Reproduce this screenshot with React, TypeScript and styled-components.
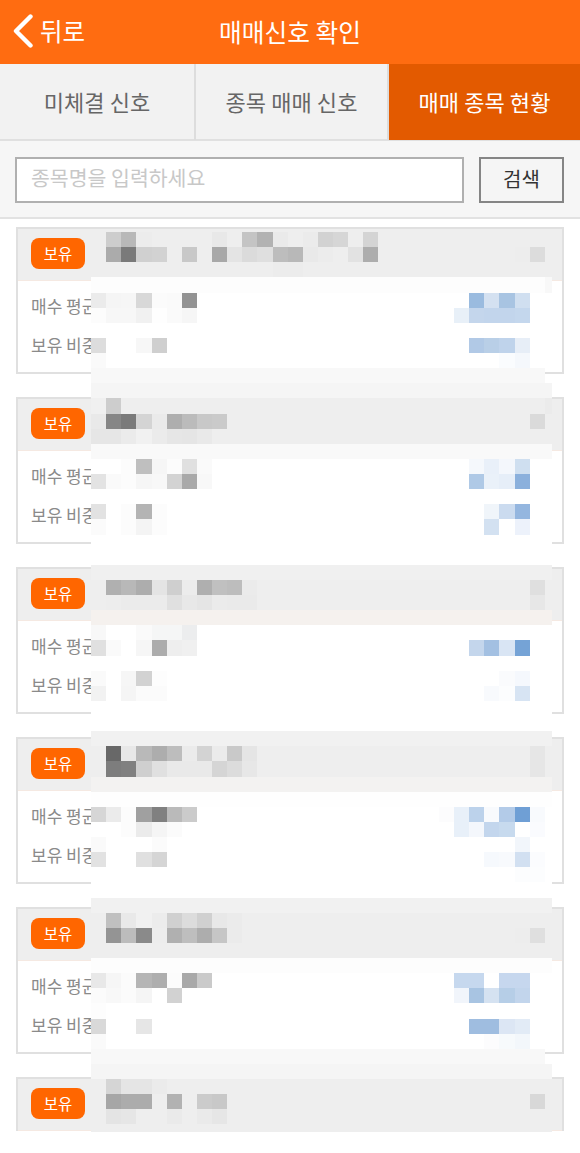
import React from "react";
import styled, { createGlobalStyle } from "styled-components";

const GlobalStyle = createGlobalStyle`
  html, body { margin: 0; padding: 0; background: #fff; }
  * { box-sizing: border-box; }
  body { font-family: "Noto Sans CJK KR", "Noto Sans", sans-serif; }
`;

const Page = styled.div`
  position: relative;
  width: 580px;
  height: 1153px;
  overflow: hidden;
  background: #fff;
`;

const TopBar = styled.header`
  display: grid;
  grid-template-columns: 1fr auto 1fr;
  align-items: center;
  height: 64px;
  padding-bottom: 3px;
  background: #ff6c11;
  color: #fff;
`;

const BackButton = styled.button`
  display: flex;
  align-items: center;
  gap: 7px;
  padding: 0 0 0 13px;
  border: 0;
  background: none;
  color: #fff;
  font: 400 24.5px "Noto Sans CJK KR", sans-serif;
  justify-self: start;
`;

const Title = styled.h1`
  margin: 0;
  font-size: 24.7px;
  font-weight: 400;
`;

const Tabs = styled.nav`
  display: grid;
  grid-template-columns: 196px 193px 191px;
  height: 77px;
  background: #f2f2f2;
  border-bottom: 2px solid #e0e0e0;
`;

const Tab = styled.div<{ $active?: boolean }>`
  display: flex;
  align-items: center;
  justify-content: center;
  padding-bottom: 3px;
  font-size: 22px;
  letter-spacing: 0.1px;
  color: ${(p) => (p.$active ? "#fff" : "#666")};
  background: ${(p) => (p.$active ? "#e35a00" : "transparent")};
  border-right: ${(p) => (p.$active ? "0" : "2px solid #dddddd")};
  height: ${(p) => (p.$active ? "76px" : "auto")};
`;

const SearchBar = styled.form`
  display: flex;
  gap: 15px;
  height: 78px;
  padding: 16px 16px 15px 15px;
  background: #f6f6f6;
  border-bottom: 2px solid #e2e2e2;
`;

const SearchInput = styled.input`
  flex: 1;
  min-width: 0;
  height: 46px;
  padding: 0 0 6px 14px;
  border: 2px solid #b0b0b0;
  border-radius: 0;
  background: #fff;
  outline: none;
  font: 400 20.5px "Noto Sans CJK KR", sans-serif;
  &::placeholder { color: #c8c8c8; opacity: 1; }
`;

const SearchButton = styled.button`
  width: 85px;
  height: 46px;
  padding: 0 0 3px;
  border: 2px solid #858585;
  border-radius: 0;
  background: #f5f5f5;
  color: #333;
  font: 400 20px "Noto Sans CJK KR", sans-serif;
`;

const List = styled.main`
  display: flex;
  flex-direction: column;
  gap: 23px;
  padding: 8px 16px 0;
`;

const Card = styled.section<{ $cut?: boolean }>`
  flex: none;
  height: ${(p) => (p.$cut ? "54px" : "147px")};
  border: 2px solid #e0e0e0;
  border-bottom-width: ${(p) => (p.$cut ? "0" : "2px")};
  background: #fff;
`;

const CardHead = styled.div`
  display: flex;
  align-items: center;
  height: 52px;
  padding: 0 0 2px 13px;
  background: #eeeeee;
  border-bottom: 1px solid #f5e9e2;
`;

const Badge = styled.span`
  display: flex;
  align-items: center;
  justify-content: center;
  width: 54px;
  height: 31px;
  padding-bottom: 2px;
  border-radius: 8px;
  background: #ff6600;
  color: #fff;
  font-size: 15.5px;
`;

const CardBody = styled.div`
  display: flex;
  flex-direction: column;
  padding: 5px 13px 0;
`;

const InfoRow = styled.div`
  display: flex;
  align-items: center;
  height: 39px;
  color: #8a8a8a;
  font-size: 17px;
`;

const Mosaic = styled.svg`
  position: absolute;
  left: 91px;
  top: 232px;
  display: block;
`;

const CELL = 15.125;
type Cell = [number, string];

const WHITE = "#ffffff";
const BANDS: [number, string, number?][] = [
  [3, "#fdfdfd"], [4, WHITE], [5, WHITE], [6, WHITE], [7, WHITE], [8, WHITE],
  [9, "#f8f8f8", 30], [10, "#f5f5f5"], [11, "#eeeeee"], [12, "#eeeeee"], [13, "#eeeeee"],
  [14, "#f9f9f9"], [15, WHITE], [16, WHITE], [17, WHITE], [18, WHITE], [19, WHITE], [20, WHITE], [21, WHITE],
  [22, "#f0f0f0"], [23, "#eeeeee"], [24, "#eeeeee"], [25, "#f5f1ee"],
  [26, WHITE], [27, WHITE], [28, WHITE], [29, WHITE], [30, WHITE], [31, WHITE], [32, WHITE],
  [33, "#f1f1f1"], [34, "#eeeeee"], [35, "#eeeeee"], [36, "#f3f2f1"], [37, "#fefefe"],
  [38, WHITE], [39, WHITE], [40, WHITE], [41, WHITE], [42, WHITE], [43, WHITE],
  [44, "#f1f1f1"], [45, "#eeeeee"], [46, "#eeeeee"], [47, "#eeeeee"], [48, "#fdfdfd"],
  [49, WHITE], [50, WHITE], [51, WHITE], [52, WHITE], [53, WHITE],
  [54, "#f8f8f8", 30], [55, "#f5f5f5"], [56, "#eeeeee"], [57, "#eeeeee"], [58, "#eeeeee"], [59, "#eeeeee"],
];

const CELLS: Record<number, Cell[]> = {
  0: [[1, "#cdcdcd"], [2, "#b8b8b8"], [3, "#ececec"], [8, "#e8e8e8"], [10, "#c4c4c4"], [11, "#b2b2b2"], [12, "#eaeaea"], [14, "#ebebeb"], [15, "#d2d2d2"], [16, "#d6d6d6"], [18, "#d4d4d4"]],
  1: [[1, "#ababab"], [2, "#7a7a7a"], [3, "#d0d0d0"], [4, "#d2d2d2"], [6, "#c8c8c8"], [8, "#a8a8a8"], [9, "#e4e4e4"], [10, "#dbdbdb"], [11, "#dfdfdf"], [12, "#bdbdbd"], [13, "#b8b8b8"], [14, "#e9e9e9"], [15, "#ececec"], [17, "#e2e2e2"], [18, "#adadad"], [28, "#ededed"], [29, "#dcdcdc"]],
  2: [[12, "#ececec"], [13, "#ececec"]],
  3: [[30, "#f8f8f8"]],
  4: [[0, "#ebebeb"], [1, "#f5f5f5"], [2, "#f6f6f6"], [3, "#d8d8d8"], [4, "#fbfbfb"], [5, "#fafafa"], [6, "#939393"], [25, "#9abbdf"], [26, "#d4e1f1"], [27, "#a8c4e2"], [28, "#d0dff0"]],
  5: [[0, "#fcfcfc"], [1, "#f7f7f7"], [2, "#f7f7f7"], [3, "#f1f1f1"], [4, "#fefefe"], [5, "#fafafa"], [6, "#f6f6f6"], [24, "#e8f0f8"], [25, "#c4d6ec"], [26, "#c2d5ec"], [27, "#c2d5ec"], [28, "#c4d7ed"]],
  7: [[0, "#dddddd"], [3, "#f7f7f7"], [4, "#cfcfcf"], [25, "#b1c9e6"], [26, "#b9cfe7"], [27, "#bfd3eb"], [28, "#e7eef7"]],
  8: [[0, "#fafafa"], [27, "#fafcfe"], [28, "#f5f8fc"]],
  11: [[0, "#f0f0f0"], [1, "#cdcdcd"], [30, "#ebebeb"]],
  12: [[0, "#e9e9e9"], [1, "#868686"], [2, "#7a7a7a"], [3, "#d4d4d4"], [4, "#eaeaea"], [5, "#aeaeae"], [6, "#bbbbbb"], [7, "#c8c8c8"], [8, "#cacaca"], [29, "#dadada"]],
  13: [[0, "#e6e6e6"], [1, "#e6e6e6"], [2, "#ebebeb"], [3, "#f1f1f1"], [4, "#ebebeb"], [5, "#e6e6e6"], [6, "#e5e5e5"], [7, "#e9e9e9"]],
  15: [[2, "#fcfcfc"], [3, "#bfbfbf"], [4, "#f6f6f6"], [5, "#fcfcfc"], [6, "#e0e0e0"], [7, "#fafafa"], [25, "#f5f8fc"], [26, "#e9f0f9"], [27, "#f4f7fc"], [28, "#cfdff0"]],
  16: [[0, "#e3e3e3"], [1, "#fafafa"], [2, "#fcfcfc"], [3, "#f6f6f6"], [4, "#f8f8f8"], [5, "#d3d3d3"], [6, "#a9a9a9"], [7, "#f8f8f8"], [25, "#afc9e6"], [26, "#eaf1f9"], [27, "#e6eef8"], [28, "#8bb0dc"]],
  18: [[0, "#e2e2e2"], [2, "#fcfcfc"], [3, "#b4b4b4"], [4, "#fcfcfc"], [26, "#f0f5fa"], [27, "#cbdbef"], [28, "#94b6df"]],
  19: [[0, "#fbfbfb"], [2, "#fcfcfc"], [3, "#f4f4f4"], [4, "#fcfcfc"], [26, "#d3e1f1"], [28, "#edf2fb"]],
  23: [[1, "#b0b0b0"], [2, "#b8b8b8"], [3, "#adadad"], [4, "#e4e4e4"], [5, "#cfcfcf"], [6, "#ececec"], [7, "#afafaf"], [8, "#c0c0c0"], [9, "#bdbdbd"], [10, "#ebebeb"], [29, "#dfdfdf"]],
  24: [[1, "#ededed"], [2, "#ebebeb"], [3, "#ebebeb"], [4, "#ebebeb"], [5, "#e0e0e0"], [6, "#e8e8e8"], [7, "#e5e5e5"], [8, "#ebebeb"], [9, "#eaeaea"], [10, "#eaeaea"], [29, "#e7e7e7"]],
  26: [[0, "#f8f8f8"], [3, "#fafafa"], [4, "#f5f6f6"], [5, "#f5f6f6"], [6, "#ecedee"]],
  27: [[0, "#e0e0e0"], [1, "#fafafa"], [3, "#f6f6f6"], [4, "#acacac"], [5, "#eeeeee"], [6, "#f0f0f0"], [25, "#c4d6ec"], [26, "#a3c0e2"], [27, "#d9e5f4"], [28, "#75a3d6"]],
  29: [[0, "#fafafa"], [2, "#f6f6f6"], [3, "#d2d2d2"], [4, "#fdfdfd"], [27, "#fafbfd"], [28, "#f5f8fd"]],
  30: [[0, "#f2f2f2"], [2, "#f5f5f5"], [3, "#fbfbfb"], [4, "#fbfbfb"], [26, "#f8fafd"], [27, "#fcfdfe"], [28, "#d7e4f3"]],
  34: [[1, "#686868"], [2, "#e8e8e8"], [3, "#b9b9b9"], [4, "#adadad"], [5, "#bdbdbd"], [6, "#ebebeb"], [7, "#d3d3d3"], [8, "#ebebeb"], [9, "#c9c9c9"], [10, "#e5e5e5"], [29, "#e6e6e6"]],
  35: [[1, "#7d7d7d"], [2, "#808080"], [3, "#cfcfcf"], [4, "#e0e0e0"], [5, "#e9e9e9"], [6, "#e9e9e9"], [7, "#e9e9e9"], [8, "#d5d5d5"], [9, "#dcdcdc"], [10, "#e7e7e7"], [29, "#e6e6e6"]],
  38: [[0, "#d6d6d6"], [1, "#ebebeb"], [2, "#fcfcfc"], [3, "#a0a0a0"], [4, "#808080"], [5, "#bababa"], [6, "#cbcbcb"], [23, "#fcfcfd"], [24, "#e8f0f9"], [25, "#bcd2eb"], [26, "#f8fafd"], [27, "#b3cbe8"], [28, "#6f9fd5"], [29, "#f8fafd"]],
  39: [[2, "#fcfcfc"], [3, "#ebebeb"], [4, "#f5f5f5"], [5, "#fbfbfb"], [24, "#e8f0f9"], [25, "#f4f7fc"], [26, "#c3d6ed"], [27, "#c7daee"], [29, "#fafbfe"]],
  40: [[0, "#fafafa"], [4, "#fbfbfb"], [28, "#f2f6fb"]],
  41: [[0, "#e2e2e2"], [3, "#e0e0e0"], [4, "#d5d5d5"], [26, "#f6f9fd"], [27, "#f8fafd"], [28, "#d2e0f1"], [29, "#fbfcfe"]],
  42: [[28, "#fcfdfe"], [29, "#fcfdfe"]],
  45: [[1, "#c0c0c0"], [2, "#e9e9e9"], [3, "#f1f1f1"], [4, "#ececec"], [5, "#d0d0d0"], [6, "#dcdcdc"], [7, "#d0d0d0"], [8, "#e8e8e8"], [9, "#ebebeb"]],
  46: [[1, "#949494"], [2, "#bcbcbc"], [3, "#8a8a8a"], [4, "#ededed"], [5, "#b0b0b0"], [6, "#bebebe"], [7, "#adadad"], [8, "#c6c6c6"], [9, "#ebebeb"], [28, "#ededed"], [29, "#dfdfdf"]],
  49: [[0, "#e8e8e8"], [1, "#f6f6f6"], [2, "#fbfbfb"], [3, "#b5b5b5"], [4, "#aeaeae"], [5, "#fcfcfc"], [6, "#a9a9a9"], [7, "#cacaca"], [24, "#c6d8ee"], [25, "#c6d8ee"], [27, "#c6d7ee"], [28, "#c6d7ee"]],
  50: [[0, "#fbfbfb"], [1, "#f8f8f8"], [2, "#fbfbfb"], [3, "#f5f5f5"], [5, "#d2d2d2"], [24, "#f1f5fb"], [25, "#a8c4e2"], [26, "#d5e2f1"], [27, "#b6cee7"], [28, "#c2d5ec"]],
  51: [[0, "#fdfdfd"]],
  52: [[0, "#d9d9d9"], [3, "#e6e6e6"], [25, "#9fbde0"], [26, "#9fbde0"], [27, "#dce6f4"], [28, "#e2ebf6"]],
  53: [[0, "#fafafa"], [26, "#fcfcfd"], [27, "#f7fafc"], [28, "#f3f7fb"]],
  56: [[1, "#d5d5d5"], [2, "#e5e5e5"], [3, "#e5e5e5"], [4, "#ebebeb"]],
  57: [[1, "#a6a6a6"], [2, "#acacac"], [3, "#acacac"], [5, "#b2b2b2"], [7, "#cbcbcb"], [8, "#c8c8c8"], [29, "#d8d8d8"]],
  58: [[1, "#e4e4e4"], [2, "#e6e6e6"], [5, "#eaeaea"], [7, "#eaeaea"], [8, "#e6e6e6"]],
};

const FULL_CARDS = [0, 1, 2, 3, 4];

export default function App() {
  return (
    <Page>
      <GlobalStyle />
      <TopBar>
        <BackButton type="button">
          <svg width="20" height="34" viewBox="0 0 20 34" fill="none" aria-hidden="true">
            <path d="M17.5 2.5 L3 17 L17.5 31.5" stroke="#fff" strokeWidth="4.4" strokeLinecap="round" strokeLinejoin="round" />
          </svg>
          뒤로
        </BackButton>
        <Title>매매신호 확인</Title>
      </TopBar>
      <Tabs>
        <Tab>미체결 신호</Tab>
        <Tab>종목 매매 신호</Tab>
        <Tab $active>매매 종목 현황</Tab>
      </Tabs>
      <SearchBar onSubmit={(e) => e.preventDefault()}>
        <SearchInput placeholder="종목명을 입력하세요" />
        <SearchButton type="submit">검색</SearchButton>
      </SearchBar>
      <List>
        {FULL_CARDS.map((id) => (
          <Card key={id}>
            <CardHead>
              <Badge>보유</Badge>
            </CardHead>
            <CardBody>
              <InfoRow>매수 평균</InfoRow>
              <InfoRow>보유 비중</InfoRow>
            </CardBody>
          </Card>
        ))}
        <Card $cut>
          <CardHead>
            <Badge>보유</Badge>
          </CardHead>
        </Card>
      </List>
      <Mosaic width="461" height="900" viewBox="0 0 461 900" shapeRendering="crispEdges" aria-hidden="true">
        {BANDS.map(([row, color, cols]) => (
          <rect key={row} x={0} y={row * CELL} width={cols ? cols * CELL : 461} height={CELL + 0.5} fill={color} />
        ))}
        {Object.entries(CELLS).flatMap(([row, cells]) =>
          cells.map(([col, color]) => (
            <rect key={`${row}-${col}`} x={col * CELL} y={Number(row) * CELL} width={col === 30 ? 7 : CELL} height={CELL} fill={color} />
          ))
        )}
      </Mosaic>
    </Page>
  );
}
